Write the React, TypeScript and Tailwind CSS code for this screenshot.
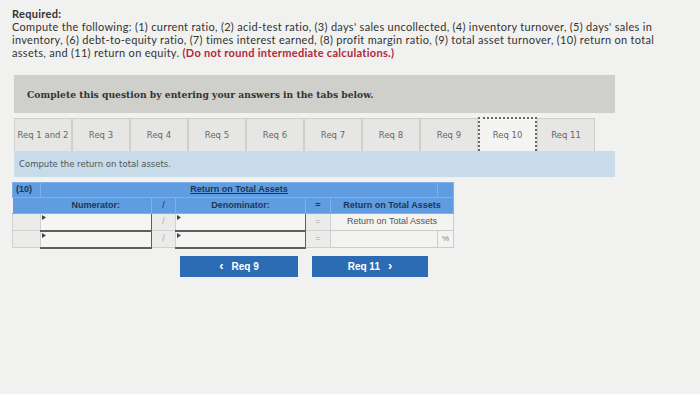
import React from "react";

const tabs = ["Req 1 and 2", "Req 3", "Req 4", "Req 5", "Req 6", "Req 7", "Req 8", "Req 9", "Req 10", "Req 11"];

function Marker() {
  return (
    <svg className="absolute left-[1px] top-[1px]" width="4" height="5" viewBox="0 0 4 5">
      <polygon points="0,0 4,2.5 0,5" fill="#444" />
    </svg>
  );
}

function InputCell({ w }: { w: string }) {
  return (
    <td className={`${w} p-0 relative bg-[#f5f5f4] border border-b-2 border-[#5e5e5e]`}>
      <Marker />
    </td>
  );
}

export default function App() {
  return (
    <div className="w-[700px] h-[394px] overflow-hidden bg-[#f1f1ef] font-['Lato','Liberation_Sans',sans-serif]">
      <div className="pl-3 pt-[7px] text-[11px] leading-[13px] tracking-[0.3px] text-[#333] whitespace-nowrap">
        <p className="font-bold">Required:</p>
        <p>
          Compute the following: (1) current ratio, (2) acid-test ratio, (3) days' sales uncollected, (4) inventory
          turnover, (5) days' sales in
          <br />
          inventory, (6) debt-to-equity ratio, (7) times interest earned, (8) profit margin ratio, (9) total asset
          turnover, (10) return on total
          <br />
          assets, and (11) return on equity.{" "}
          <span className="font-bold text-[#b0283c]">(Do not round intermediate calculations.)</span>
        </p>
      </div>

      <div className="ml-[14px] mt-[16px] w-[601px] h-[38px] bg-[#cfcfcc] flex items-center pl-[13px] pt-[1px] font-['DejaVu_Serif',serif] font-bold text-[9.2px] text-[#333]">
        Complete this question by entering your answers in the tabs below.
      </div>

      <div className="ml-[14px] mt-[5px] w-[601px] h-[33px] flex font-['DejaVu_Sans',sans-serif] text-[8.5px] text-[#666]">
        {tabs.map((t) =>
          t === "Req 10" ? (
            <div
              key={t}
              className="w-[59px] h-[34px] -mt-[1px] flex items-center justify-center bg-[#f4f4f3] border-2 border-b-0 border-dotted border-[#666]"
            >
              {t}
            </div>
          ) : (
            <div
              key={t}
              className="w-[58px] flex items-center justify-center bg-[#e6e6e4] border border-b-0 border-[#cfcfcd]"
            >
              {t}
            </div>
          )
        )}
      </div>

      <div className="ml-[14px] w-[601px] h-[26px] bg-[#c7dbe8] flex items-center pl-[5px] font-['DejaVu_Sans',sans-serif] text-[8.5px] text-[#555]">
        Compute the return on total assets.
      </div>

      <table className="ml-[12px] mt-[5px] border-collapse table-fixed font-['Liberation_Sans',sans-serif] text-[9px]">
        <tbody>
          <tr className="h-[15px] bg-[#5f9de0] text-[#1c3556] font-bold">
            <td className="w-[28px] p-0 pl-[3px] border border-[#7fb1e5]">(10)</td>
            <td colSpan={5} className="p-0 text-center underline border border-[#7fb1e5]">
              Return on Total Assets
            </td>
            <td className="w-[16px] p-0 border border-[#7fb1e5]"></td>
          </tr>
          <tr className="h-[16px] bg-[#5f9de0] text-[#1c3556] font-bold">
            <td className="p-0 border-y border-[#7fb1e5]"></td>
            <td className="w-[111px] p-0 text-center border-y border-r border-[#7fb1e5]">Numerator:</td>
            <td className="w-[24px] p-0 text-center font-normal border border-[#7fb1e5]">/</td>
            <td className="w-[130px] p-0 text-center border border-[#7fb1e5]">Denominator:</td>
            <td className="w-[25px] p-0 text-center border border-[#7fb1e5]">=</td>
            <td colSpan={2} className="p-0 text-center border border-[#7fb1e5]">
              Return on Total Assets
            </td>
          </tr>
          <tr className="h-[17px]">
            <td className="p-0 bg-[#ebebea] border border-[#d0d0d0]"></td>
            <InputCell w="w-[111px]" />
            <td className="p-0 text-center text-[#aaa] bg-[#ebebea] border border-[#d0d0d0]">/</td>
            <InputCell w="w-[130px]" />
            <td className="p-0 text-center text-[#aaa] bg-[#ebebea] border border-[#d0d0d0]">=</td>
            <td colSpan={2} className="p-0 text-center text-[#555] bg-[#f3f3f2] border border-[#ccc]">
              Return on Total Assets
            </td>
          </tr>
          <tr className="h-[17px]">
            <td className="p-0 bg-[#ebebea] border border-[#d0d0d0]"></td>
            <InputCell w="w-[111px]" />
            <td className="p-0 text-center text-[#aaa] bg-[#ebebea] border border-[#d0d0d0]">/</td>
            <InputCell w="w-[130px]" />
            <td className="p-0 text-center text-[#aaa] bg-[#ebebea] border border-[#d0d0d0]">=</td>
            <td className="w-[107px] p-0 bg-[#f3f3f2] border border-[#ccc]"></td>
            <td className="p-0 text-center text-[#888] text-[8px] bg-[#f3f3f2] border border-[#ccc]">%</td>
          </tr>
        </tbody>
      </table>

      <div className="ml-[180px] mt-[7px] flex gap-[14px] font-['Liberation_Sans',sans-serif] text-[10px] font-bold text-white">
        <button className="w-[118px] h-[21px] bg-[#2c6cb5] flex items-center justify-center gap-[8px]">
          <span className="text-[13px] leading-none -mt-[2px]">‹</span>
          <span>Req 9</span>
        </button>
        <button className="w-[116px] h-[21px] bg-[#2c6cb5] flex items-center justify-center gap-[8px]">
          <span>Req 11</span>
          <span className="text-[13px] leading-none -mt-[2px]">›</span>
        </button>
      </div>
    </div>
  );
}
